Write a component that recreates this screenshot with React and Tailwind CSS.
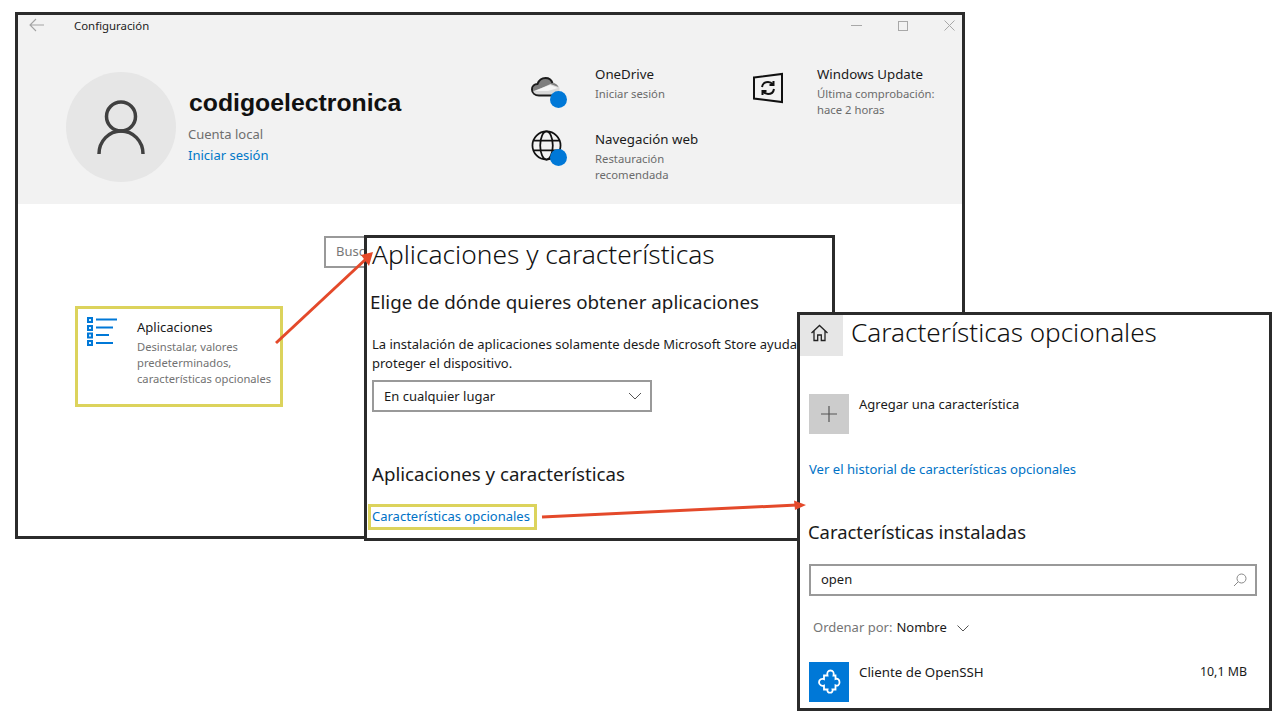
import React from "react";

const sans = { fontFamily: '"Noto Sans", "Open Sans", sans-serif' };

const Tile = ({ icon, title, lines, className }) => (
  <div className={`flex ${className}`}>
    {icon}
    <div className="flex flex-col">
      <span className="text-[13.3px] leading-[20px] text-[#1a1a1a]">{title}</span>
      <span className="mt-[2px] text-[11.3px] leading-[16px] text-[#6b6b6b] whitespace-pre-line">{lines}</span>
    </div>
  </div>
);

const OneDriveIcon = () => (
  <div className="relative w-[36px] h-[32px] shrink-0 mt-[13px] ml-[1px] mr-[28px]">
    <svg width="30" height="20" viewBox="0 0 30 20" fill="none">
      <path d="M8 18.500C4 18.500 1 16 1 12.500 1 9 3.500 7 6.500 7 8 3 11 1 14.500 1c3.500 0 6 2 7 5 3 0 6 2.500 7 5v7.500z" fill="#d9d9d9" />
      <path d="M6.500 7C8 3 11 1 14.500 1c3.500 0 6 2 7 5 3 0 5 2 6 4l-8-3-9 4-8 3c-1-3 0-6 4-7z" fill="#7d7d7d" />
      <path d="M4 14l7-3 8-3 8 3-10 3z" fill="#f4f4f4" />
      <path d="M24 18.500H8C4 18.500 1 16 1 12.500 1 9 3.500 7 6.500 7 8 3 11 1 14.500 1c3.500 0 6 2 7 5" stroke="#1c1c1c" strokeWidth="2" />
    </svg>
    <span className="absolute left-[19px] top-[14px] w-[17px] h-[17px] rounded-full bg-[#0078d7]" />
  </div>
);

const GlobeIcon = () => (
  <div className="relative w-[36px] h-[36px] shrink-0 mt-[1px] ml-[1px] mr-[28px]">
    <svg width="31" height="31" viewBox="0 0 32 32" fill="none" stroke="#111" strokeWidth="1.800">
      <circle cx="16" cy="16" r="14.500" />
      <ellipse cx="16" cy="16" rx="6.500" ry="14.500" />
      <path d="M3 11h26M3 21h26" />
    </svg>
    <span className="absolute left-[19px] top-[19px] w-[17px] h-[17px] rounded-full bg-[#0078d7]" />
  </div>
);

const UpdateIcon = () => (
  <svg width="32" height="32" viewBox="0 0 32 32" fill="none" stroke="#111" className="shrink-0 mt-[8px] mr-[33px]">
    <path d="M2 5.500L30 2v28L2 26.500z" strokeWidth="2" />
    <path d="M10 15c.5-3 3-5 6-5 2 0 3.500 .8 5 2.500M21.500 9v4h-4M22 17c-.5 3-3 5-6 5-2 0-3.500-.8-5-2.500M10.500 23v-4h4" strokeWidth="2" />
  </svg>
);

const ListIcon = () => (
  <svg width="31" height="30" viewBox="0 0 31 30" className="shrink-0">
    <g fill="#dbeeff" stroke="#0078d7" strokeWidth="2">
      <rect x="1" y="1" width="4" height="4" />
      <rect x="1" y="9" width="4" height="4" />
      <rect x="1" y="16.500" width="4" height="4" />
      <rect x="1" y="24" width="4" height="4" />
    </g>
    <path d="M9 2.500h21M9 10.500h17M9 18h13M9 26h17" stroke="#0078d7" strokeWidth="2" fill="none" />
  </svg>
);

const PuzzleIcon = () => (
  <svg width="23" height="26" viewBox="0 0 23 26" fill="none" stroke="#fff" strokeWidth="1.800">
    <path d="M6 6.500h3.500c-.8-3 .5-5 3-5s3.800 2 3 5h2V10c2-.8 4 .3 4 3.200s-2 4-4 3.200v4.100h-3c.5 2-.7 3.200-2.500 3.200s-3-1.200-2.500-3.200H6v-4c-2 .8-5-.3-5-3.200s3-4 5-3.200z" />
  </svg>
);

const Window = ({ className, children }) => (
  <div className={`absolute border-[3px] border-[#2b2b2b] bg-white overflow-hidden ${className}`}>
    {children}
  </div>
);

const SettingsWindow = () => (
  <Window className="left-[15px] top-[12px] w-[950px] h-[527px]">
    <div className="bg-[#f2f2f2] h-[189px] flex flex-col">
      <div className="flex items-center h-[22px]">
        <svg width="16" height="14" viewBox="0 0 16 14" fill="none" stroke="#a3a3a3" strokeWidth="1.100" className="ml-[11px] mb-[2px]">
          <path d="M15 7H1M7 1L1 7l6 6" />
        </svg>
        <span className="ml-[29px] text-[11.4px] text-[#222]">Configuración</span>
        <div className="ml-auto flex items-center gap-[36px] pr-[7px] mt-[-1px]">
          <span className="w-[11px] h-px bg-[#a8a8a8]" />
          <span className="w-[10px] h-[10px] border border-[#a8a8a8]" />
          <svg width="11" height="11" viewBox="0 0 11 11" stroke="#a8a8a8">
            <path d="M.5 .5l10 10M10.500 .5l-10 10" />
          </svg>
        </div>
      </div>
      <div className="flex pt-[35px] pl-[48px]">
        <div className="w-[110px] h-[110px] rounded-full bg-[#e6e6e6] flex items-center justify-center shrink-0">
          <svg width="48" height="55" viewBox="0 0 48 55" fill="none" stroke="#404040" strokeWidth="3.500">
            <circle cx="24" cy="16.500" r="14.500" />
            <path d="M2 54c0-13 10-23 22-23s22 10 22 23" />
          </svg>
        </div>
        <div className="ml-[12px] flex flex-col w-[342px]">
          <span className="mt-[16px] ml-[1px] text-[24.8px] leading-[30px] font-bold text-[#111]" style={{ fontFamily: '"Liberation Sans", sans-serif' }}>
            codigoelectronica
          </span>
          <span className="mt-[6px] text-[13px] leading-[20px] text-[#6e6e6e]">Cuenta local</span>
          <span className="mt-[1px] text-[13px] leading-[20px] text-[#0078c8]">Iniciar sesión</span>
        </div>
        <div className="flex flex-col w-[222px] mt-[-8px] gap-[16px]">
          <Tile icon={<OneDriveIcon />} title="OneDrive" lines="Iniciar sesión" className="h-[49px]" />
          <Tile icon={<GlobeIcon />} title="Navegación web" lines={"Restauración\nrecomendada"} />
        </div>
        <Tile icon={<UpdateIcon />} title="Windows Update" lines={"Última comprobación:\nhace 2 horas"} className="mt-[-8px] h-[60px]" />
      </div>
    </div>
    <div className="relative pl-[306px] pt-[32px]">
      <div className="w-[120px] h-[32px] border-2 border-[#999] pl-[10px] text-[13px] leading-[26px] text-[#777]">Buscar</div>
    </div>
    <div className="ml-[57px] mt-[38px] w-[208px] h-[101px] border-[3px] border-[#dcd35c] flex pl-[9px] pt-[8px]">
      <ListIcon />
      <div className="ml-[19px] flex flex-col whitespace-nowrap">
        <span className="text-[13px] leading-[20px] text-[#1a1a1a]">Aplicaciones</span>
        <span className="mt-[2px] text-[11.2px] leading-[16px] text-[#727272] whitespace-pre-line">{"Desinstalar, valores\npredeterminados,\ncaracterísticas opcionales"}</span>
      </div>
    </div>
  </Window>
);

const AppsWindow = () => (
  <Window className="left-[364px] top-[235px] w-[471px] h-[306px]">
    <div className="flex flex-col pl-[5px] whitespace-nowrap">
      <h1 className="text-[26.3px] leading-[32px] font-light text-[#111]">Aplicaciones y características</h1>
      <h2 className="mt-[18px] -ml-[2px] text-[18.8px] leading-[28px] text-[#1a1a1a]">Elige de dónde quieres obtener aplicaciones</h2>
      <p className="mt-[19px] text-[13px] leading-[19px] text-[#1a1a1a]">
        La instalación de aplicaciones solamente desde Microsoft Store ayuda a<br />proteger el dispositivo.
      </p>
      <div className="mt-[7px] w-[280px] h-[32px] border-2 border-[#999] flex items-center justify-between pl-[10px] pr-[8px]">
        <span className="pt-[1px] text-[13px] text-[#1a1a1a]">En cualquier lugar</span>
        <svg width="14" height="8" viewBox="0 0 14 8" fill="none" stroke="#555"><path d="M1 1l6 6 6-6" /></svg>
      </div>
      <h2 className="mt-[48px] text-[18.7px] leading-[28px] text-[#1a1a1a]">Aplicaciones y características</h2>
      <div className="mt-[16px] -ml-[4px] w-[169px] h-[26px] border-[3px] border-[#dcd35c] flex items-center pl-[1px]">
        <span className="text-[13px] text-[#0072c6]">Características opcionales</span>
      </div>
    </div>
  </Window>
);

const OptionalWindow = () => (
  <Window className="left-[797px] top-[312px] w-[475px] h-[399px]">
    <div className="flex">
      <div className="w-[43px] h-[41px] bg-[#e6e6e6] flex items-center justify-center pr-[4px] pb-[6px]">
        <svg width="19" height="18" viewBox="0 0 18 18" fill="none" stroke="#222" strokeWidth="1.300">
          <path d="M1 9l8-7.500L17 9M3.500 7v9.500h3.700V11h3.600v5.500h3.700V7" />
        </svg>
      </div>
      <h1 className="ml-[8px] text-[26.1px] leading-[34px] font-light text-[#111]">Características opcionales</h1>
    </div>
    <div className="flex flex-col pl-[9px] pr-[12px]">
      <div className="mt-[38px] flex">
        <div className="w-[40px] h-[40px] bg-[#cccccc] flex items-center justify-center">
          <svg width="16" height="16" viewBox="0 0 16 16" stroke="#555" strokeWidth="1.200"><path d="M8 0v16M0 8h16" /></svg>
        </div>
        <span className="ml-[10px] text-[13px] leading-[20px] text-[#1a1a1a]">Agregar una característica</span>
      </div>
      <span className="mt-[25px] text-[13.1px] leading-[20px] text-[#0072c6]">Ver el historial de características opcionales</span>
      <h2 className="mt-[40px] -ml-[1px] text-[18.4px] leading-[26px] text-[#1a1a1a]">Características instaladas</h2>
      <div className="mt-[19px] h-[32px] border-2 border-[#999] flex items-center justify-between pl-[10px] pr-[8px]">
        <span className="text-[13px] text-[#1a1a1a]">open</span>
        <svg width="14" height="14" viewBox="0 0 14 14" fill="none" stroke="#888"><circle cx="8.500" cy="5.500" r="4.500" /><path d="M5 9l-4 4" /></svg>
      </div>
      <div className="mt-[22px] ml-[4px] flex items-center h-[20px] text-[13px]">
        <span className="text-[#757575]">Ordenar por:</span>
        <span className="ml-[4px] text-[#1a1a1a]">Nombre</span>
        <svg width="12" height="7" viewBox="0 0 12 7" fill="none" stroke="#555" className="ml-[10px]"><path d="M.5 .5L6 6l5.500-5.500" /></svg>
      </div>
      <div className="mt-[24px] flex">
        <div className="w-[40px] h-[40px] bg-[#0078d7] flex items-center justify-center">
          <PuzzleIcon />
        </div>
        <span className="ml-[10px] text-[13.3px] leading-[20px] text-[#1a1a1a]">Cliente de OpenSSH</span>
        <span className="ml-auto mr-[10px] text-[12.4px] leading-[20px] text-[#1a1a1a]">10,1 MB</span>
      </div>
    </div>
  </Window>
);

const Arrows = () => (
  <svg className="absolute left-0 top-0 pointer-events-none" width="1280" height="720" fill="none">
    <path d="M276 343L366 259" stroke="#e4492a" strokeWidth="3" />
    <path d="M373 252l-12 3 8 11z" fill="#e4492a" />
    <path d="M542 517L797 505" stroke="#e4492a" strokeWidth="3" />
    <path d="M806 505l-12-4.500 1 9.500z" fill="#e4492a" />
  </svg>
);

export default function App() {
  return (
    <div className="relative w-[1280px] h-[720px] bg-white overflow-hidden" style={sans}>
      <SettingsWindow />
      <AppsWindow />
      <OptionalWindow />
      <Arrows />
    </div>
  );
}
